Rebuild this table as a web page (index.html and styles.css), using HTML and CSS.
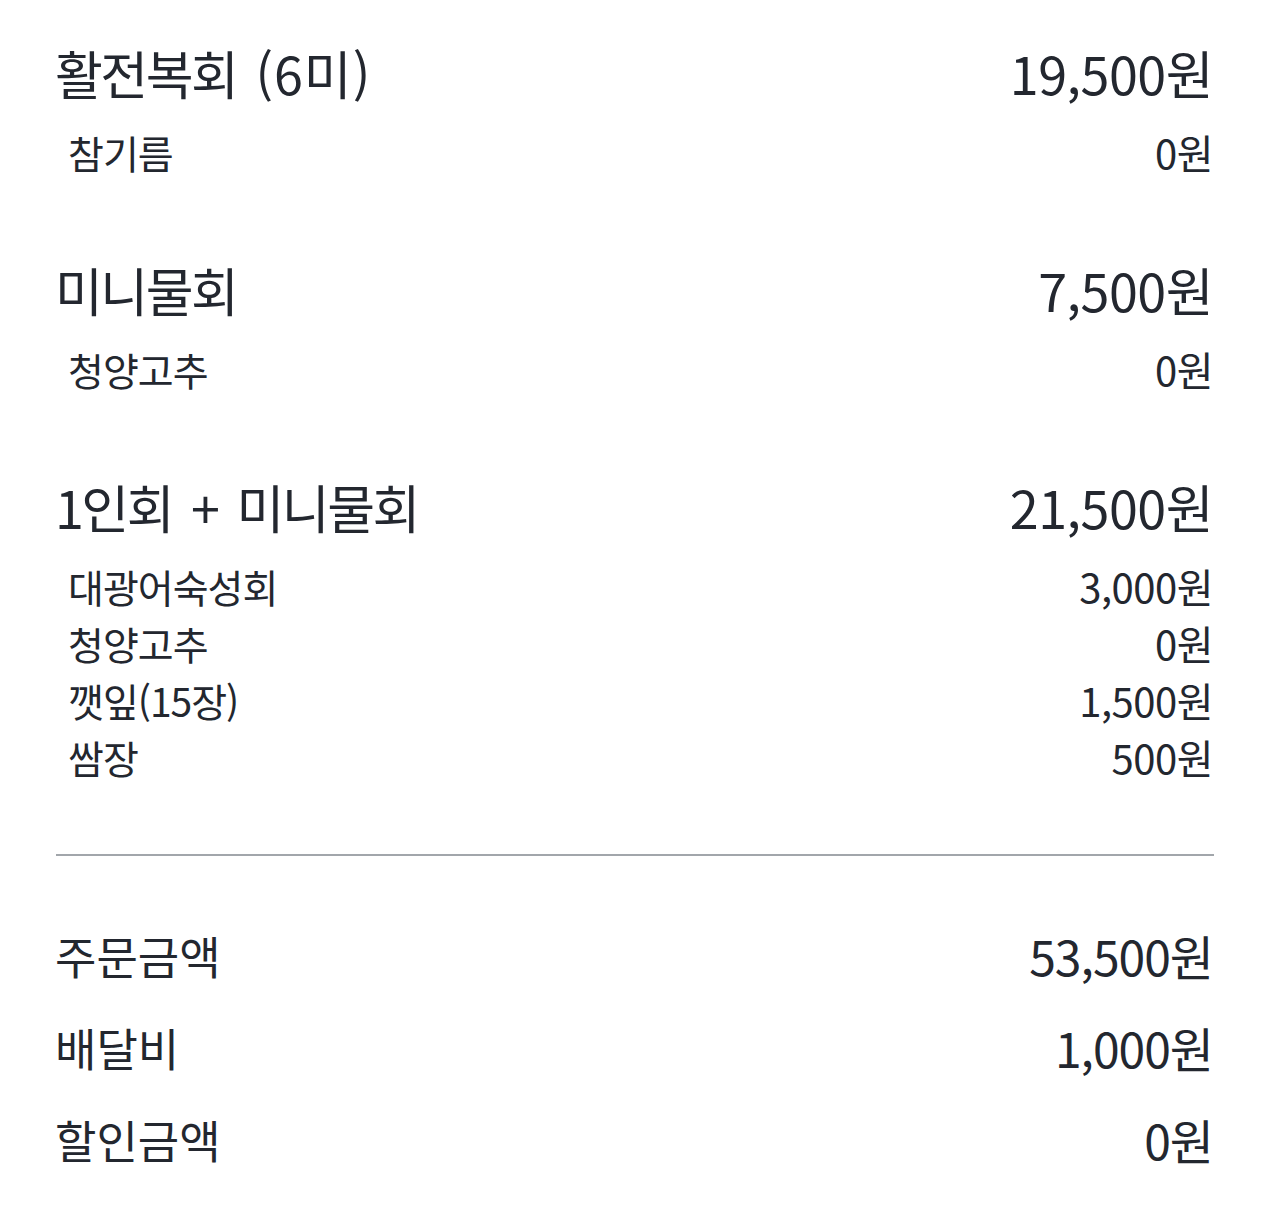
FILE: index.html
```html
<!DOCTYPE html>
<html lang="ko">
<head>
<meta charset="utf-8">
<title>주문 내역</title>
<link rel="stylesheet" href="styles.css">
</head>
<body>
<div class="receipt">
  <section class="item">
    <div class="row main"><span class="name">활전복회 <span class="qty">(6미)</span></span><span class="price">19,500원</span></div>
    <div class="row sub"><span class="name">참기름</span><span class="price">0원</span></div>
  </section>
  <section class="item">
    <div class="row main"><span class="name">미니물회</span><span class="price">7,500원</span></div>
    <div class="row sub"><span class="name">청양고추</span><span class="price">0원</span></div>
  </section>
  <section class="item">
    <div class="row main"><span class="name">1인회 + 미니물회</span><span class="price">21,500원</span></div>
    <div class="row sub"><span class="name">대광어숙성회</span><span class="price">3,000원</span></div>
    <div class="row sub"><span class="name">청양고추</span><span class="price">0원</span></div>
    <div class="row sub"><span class="name">깻잎(15장)</span><span class="price">1,500원</span></div>
    <div class="row sub"><span class="name">쌈장</span><span class="price">500원</span></div>
  </section>
  <hr class="divider">
  <section class="totals">
    <div class="row total"><span class="name">주문금액</span><span class="price">53,500원</span></div>
    <div class="row total"><span class="name">배달비</span><span class="price">1,000원</span></div>
    <div class="row total"><span class="name">할인금액</span><span class="price">0원</span></div>
  </section>
</div>
</body>
</html>
```
FILE: styles.css
```css
html, body {
  margin: 0;
  padding: 0;
  background: #ffffff;
}
body {
  font-family: "Noto Sans CJK KR", "Noto Sans", sans-serif;
  color: #23272f;
  width: 1287px;
}
.receipt {
  padding: 37px 74px 0 55px;
}
.row {
  display: flex;
  justify-content: space-between;
  align-items: center;
  white-space: nowrap;
}
.item + .item {
  margin-top: 74px;
}
.main {
  height: 70px;
  margin-bottom: 16px;
}
.main .name {
  font-size: 52px;
  letter-spacing: -2.5px;
  word-spacing: 7px;
}
.main .qty {
  letter-spacing: 1px;
}
.main .price {
  font-size: 52px;
  letter-spacing: -0.5px;
}
.sub {
  height: 57px;
  padding-left: 13px;
}
.sub .name {
  font-size: 39px;
  letter-spacing: -1px;
}
.sub .price {
  font-size: 40px;
  letter-spacing: -0.5px;
}
.divider {
  border: 0;
  height: 2px;
  background: #a2a6ab;
  margin: 69px 0 0 1px;
  width: 1158px;
}
.totals {
  margin-top: 53px;
}
.total {
  height: 92px;
}
.total .name {
  font-size: 45px;
  letter-spacing: 0;
}
.total .price {
  font-size: 48px;
  letter-spacing: -1px;
}
```
